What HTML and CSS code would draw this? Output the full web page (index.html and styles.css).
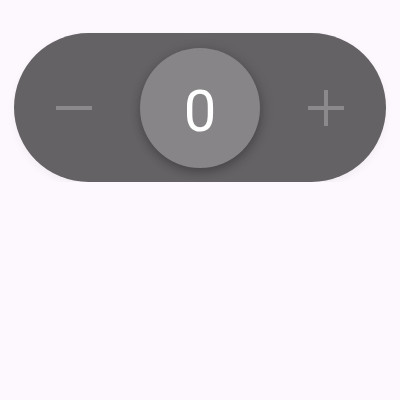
FILE: index.html
```html
<!DOCTYPE html>
<html>
<head>
<meta charset="utf-8">
<link rel="stylesheet" href="styles.css">
</head>
<body>
<div class="page">
  <div class="stepper">
    <div class="btn minus" aria-label="decrement"><span class="bar h"></span></div>
    <div class="value">0</div>
    <div class="btn plus" aria-label="increment"><span class="bar h"></span><span class="bar v"></span></div>
  </div>
</div>
</body>
</html>
```
FILE: styles.css
```css
html, body {
  margin: 0;
  padding: 0;
  background: #fdf8fd;
}
.page {
  padding-top: 33px;
  display: flex;
  justify-content: center;
}
.stepper {
  width: 372px;
  height: 149px;
  border-radius: 75px;
  background: #646264;
  box-sizing: border-box;
  padding: 0 42px;
  display: flex;
  align-items: center;
  justify-content: space-between;
  box-shadow: 0 3px 8px rgba(0,0,0,0.05);
}
.btn {
  width: 36px;
  height: 36px;
  position: relative;
}
.bar {
  position: absolute;
  background: #8b898b;
}
.bar.h {
  left: 0;
  right: 0;
  top: 16px;
  height: 4px;
}
.bar.v {
  top: 0;
  bottom: 0;
  left: 16px;
  width: 4px;
}
.value {
  width: 120px;
  height: 120px;
  box-sizing: border-box;
  padding-top: 6px;
  border-radius: 50%;
  background: #878587;
  color: #ffffff;
  font-family: Roboto, "Noto Sans", sans-serif;
  font-size: 58px;
  font-weight: 400;
  display: flex;
  align-items: center;
  justify-content: center;
  box-shadow: 0 4px 10px rgba(0,0,0,0.22), 2px 2px 14px rgba(0,0,0,0.12);
}
```
